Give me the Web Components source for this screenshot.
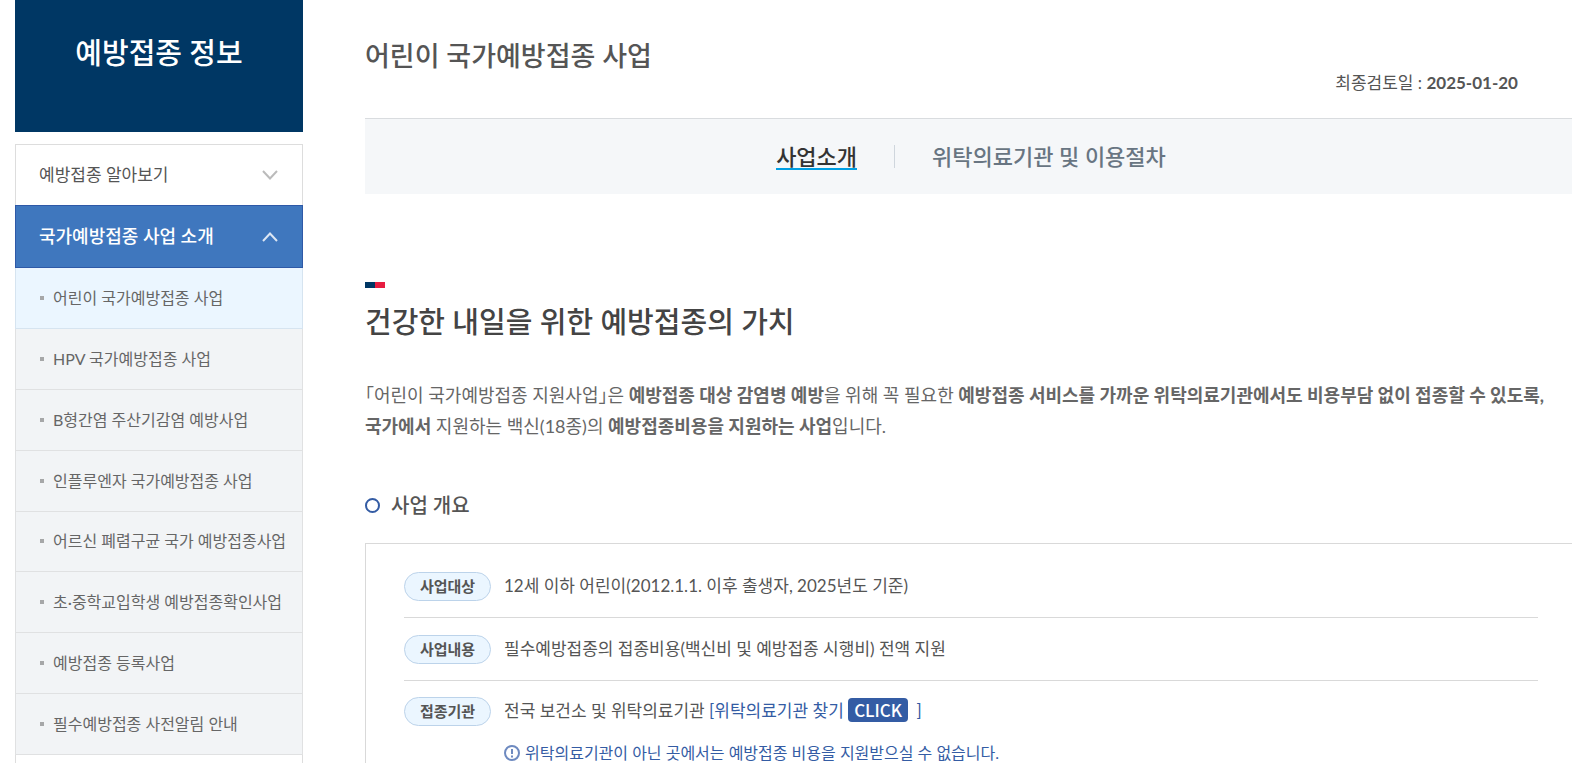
<!DOCTYPE html>
<html lang="ko">
<head>
<meta charset="utf-8">
<meta name="viewport" content="width=device-width, initial-scale=1">
<title>어린이 국가예방접종 사업</title>
<style>
  html { background: #fff; }
  body { margin: 0; overflow-x: hidden; color: #555; font-family: Lato, "Noto Sans CJK KR", sans-serif; font-size: 17px; }
</style>
</head>
<body>
<vaccine-page>
  <side-nav slot="side" heading="예방접종 정보">
    <nav-group label="예방접종 알아보기"></nav-group>
    <nav-group label="국가예방접종 사업 소개" open>
      <nav-item current>어린이 국가예방접종 사업</nav-item>
      <nav-item>HPV 국가예방접종 사업</nav-item>
      <nav-item>B형간염 주산기감염 예방사업</nav-item>
      <nav-item>인플루엔자 국가예방접종 사업</nav-item>
      <nav-item>어르신 폐렴구균 국가 예방접종사업</nav-item>
      <nav-item>초·중학교입학생 예방접종확인사업</nav-item>
      <nav-item>예방접종 등록사업</nav-item>
      <nav-item>필수예방접종 사전알림 안내</nav-item>
    </nav-group>
  </side-nav>
  <page-head date="2025-01-20">어린이 국가예방접종 사업</page-head>
  <page-tabs>
    <page-tab selected>사업소개</page-tab>
    <page-tab>위탁의료기관 및 이용절차</page-tab>
  </page-tabs>
  <intro-section></intro-section>
  <overview-section heading="사업 개요">
    <info-row label="사업대상">12세 이하 어린이(2012.1.1. 이후 출생자, 2025년도 기준)</info-row>
    <info-row label="사업내용">필수예방접종의 접종비용(백신비 및 예방접종 시행비) 전액 지원</info-row>
    <info-row label="접종기관">전국 보건소 및 위탁의료기관 <find-link>위탁의료기관 찾기</find-link>
      <info-note slot="note">위탁의료기관이 아닌 곳에서는 예방접종 비용을 지원받으실 수 없습니다.</info-note>
    </info-row>
  </overview-section>
</vaccine-page>

<script>
const define = (name, render) => customElements.define(name, class extends HTMLElement {
  connectedCallback() {
    if (this.shadowRoot) return;
    const t = document.createElement('template');
    t.innerHTML = render(this);
    this.attachShadow({ mode: 'open' }).append(t.content.cloneNode(true));
  }
});

define('vaccine-page', () => `
  <style>
    :host { display: flex; align-items: flex-start; gap: 62px; height: 100vh; margin-left: 15px; margin-right: -5px; overflow: hidden; }
    aside { flex: 0 0 288px; }
    main { flex: 1; min-width: 0; }
  </style>
  <aside><slot name="side"></slot></aside>
  <main><slot></slot></main>`);

define('side-nav', el => `
  <style>
    :host { display: block; }
    h2 { margin: 0 0 12px; padding: 26px 0 52px; background: #003764; color: #fff; text-align: center; font-size: 29px; line-height: 54px; font-weight: 500; }
    nav { border-top: 1px solid #ddd; min-height: 680px; }
    nav { box-shadow: inset 1px 0 #ddd, inset -1px 0 #ddd; }
  </style>
  <h2>${el.getAttribute('heading')}</h2>
  <nav><slot></slot></nav>`);

define('nav-group', el => `
  <style>
    :host { display: block; }
    a { display: flex; align-items: center; justify-content: space-between; padding: 0 25px 0 24px; line-height: 60px; color: #555; text-decoration: none; }
    svg { width: 16px; height: 10px; fill: none; stroke: #bbb; stroke-width: 2; }
    :host([open]) a { border: 1px solid #2e59a7; background: #3f77be; color: #fff; font-size: 18px; font-weight: 500; line-height: 61px; padding: 0 24px 0 23px; }
    :host([open]) svg { stroke: #dce6f4; }
    .sub { display: none; }
    :host([open]) .sub { display: grid; grid-auto-rows: 1fr; height: 487px; }
  </style>
  <a href="#"><span>${el.getAttribute('label')}</span>
    <svg viewBox="0 0 16 10" aria-hidden="true"><path d="${el.hasAttribute('open') ? 'M1 9 8 1.5 15 9' : 'M1 1 8 8.5 15 1'}"/></svg></a>
  <div class="sub"><slot></slot></div>`);

define('nav-item', () => `
  <style>
    :host { display: flex; border: 1px solid #e0e1e2; border-top: 0; background: #f2f4f6; }
    :host([current]) { background: #ebf6ff; border-color: #d6e4f0; }
    a { flex: 1; display: flex; align-items: center; gap: 9px; padding-left: 24px; color: #666; font-size: 16px; line-height: 24px; text-decoration: none; white-space: nowrap; }
    a::before { content: ""; width: 4px; height: 4px; background: #a6a7a8; }
  </style>
  <a href="#"><slot></slot></a>`);

define('page-head', el => `
  <style>
    :host { display: flex; justify-content: space-between; height: 118px; color: #555; }
    h1 { margin: 36px 0 0; font-size: 27px; line-height: 40px; font-weight: 500; }
    p { margin: 71px 59px 0 0; font-size: 17px; line-height: 24px; }
  </style>
  <h1><slot></slot></h1>
  <p>최종검토일 : <strong>${el.getAttribute('date')}</strong></p>`);

define('page-tabs', () => `
  <style>
    :host { display: block; border-top: 1px solid #d9dcdf; background: #f5f7f9; }
    nav { display: flex; justify-content: center; align-items: center; height: 75px; }
  </style>
  <nav><slot></slot></nav>`);

define('page-tab', () => `
  <style>
    :host { display: flex; align-items: center; }
    :host(:not(:first-child))::before { content: ""; width: 1px; height: 23px; margin: 0 37px; background: #cfd6dd; }
    a { display: block; color: #687582; font-size: 22px; line-height: 24px; font-weight: 500; text-decoration: none; }
    :host([selected]) a { color: #333; box-shadow: 0 2px #009fe3; line-height: 22px; }
  </style>
  <a href="#"><slot></slot></a>`);

define('intro-section', () => `
  <style>
    :host { display: block; padding-top: 88px; }
    h2 { margin: 0; color: #444; font-size: 29px; line-height: 48px; font-weight: 500; }
    h2::before { content: ""; display: block; width: 20px; height: 6px; margin-bottom: 10px; background: linear-gradient(90deg, #003764 50%, #e71d40 50%); }
    p { margin: 34px 0 0; color: #666; font-size: 18px; line-height: 31px; font-feature-settings: "halt"; word-break: keep-all; }
    b { font-weight: 700; }
  </style>
  <h2>건강한 내일을 위한 예방접종의 가치</h2>
  <p>「어린이 국가예방접종 지원사업」은 <b>예방접종 대상 감염병 예방</b>을 위해 꼭 필요한 <b>예방접종 서비스를 가까운 위탁의료기관에서도 비용부담 없이 접종할 수 있도록,</b> <b>국가에서</b> 지원하는 백신(18종)의 <b>예방접종비용을 지원하는 사업</b>입니다.</p>`);

define('overview-section', el => `
  <style>
    :host { display: block; padding-top: 47px; }
    h3 { display: flex; align-items: center; gap: 11px; margin: 0 0 22px; color: #555; font-size: 20px; line-height: 32px; font-weight: 500; }
    h3::before { content: ""; width: 11px; height: 11px; border: 2px solid #345ca4; border-radius: 50%; }
    .panel { border: 1px solid #d9d9d9; padding: 11px 38px 40px; }
  </style>
  <h3>${el.getAttribute('heading')}</h3>
  <div class="panel"><slot></slot></div>`);

define('info-row', el => `
  <style>
    :host { display: block; border-bottom: 1px solid #d9d9d9; }
    :host(:last-child) { border: 0; }
    dl { display: grid; grid-template-columns: 87px 1fr; column-gap: 13px; align-items: center; margin: 0; }
    dt { box-sizing: border-box; height: 29px; border: 1px solid #bcd3ea; border-radius: 15px; background: #ebf6ff; color: #555; text-align: center; font-size: 15px; line-height: 26px; font-weight: 700; }
    dd { margin: 0; color: #555; font-size: 17px; line-height: 62px; }
    :host(:last-child) dd { line-height: 60px; }
    dd.note { grid-column: 2; }
  </style>
  <dl><dt>${el.getAttribute('label')}</dt><dd><slot></slot></dd><dd class="note"><slot name="note"></slot></dd></dl>`);

define('find-link', () => `
  <style>
    :host { display: inline; }
    a { color: #345ca4; text-decoration: none; }
    span { display: inline-block; margin-right: 4px; padding: 0 6px; border-radius: 4px; background: #345ca4; color: #fff; font-family: "Noto Sans CJK KR", sans-serif; font-size: 17px; line-height: 24px; font-weight: 500; }
  </style>
  <a href="#">[<slot></slot> <span>CLICK</span> ]</a>`);

define('info-note', () => `
  <style>
    :host { display: flex; align-items: center; gap: 5px; color: #345ca4; font-size: 16px; line-height: 24px; }
    svg { width: 16px; height: 16px; flex: none; fill: none; stroke: #6e8ac0; stroke-width: 2; }
  </style>
  <svg viewBox="0 0 16 16" aria-hidden="true"><circle cx="8" cy="8" r="7"/><path d="M8 4v5M8 10.500v2"/></svg>
  <span><slot></slot></span>`);
</script>
</body>
</html>
